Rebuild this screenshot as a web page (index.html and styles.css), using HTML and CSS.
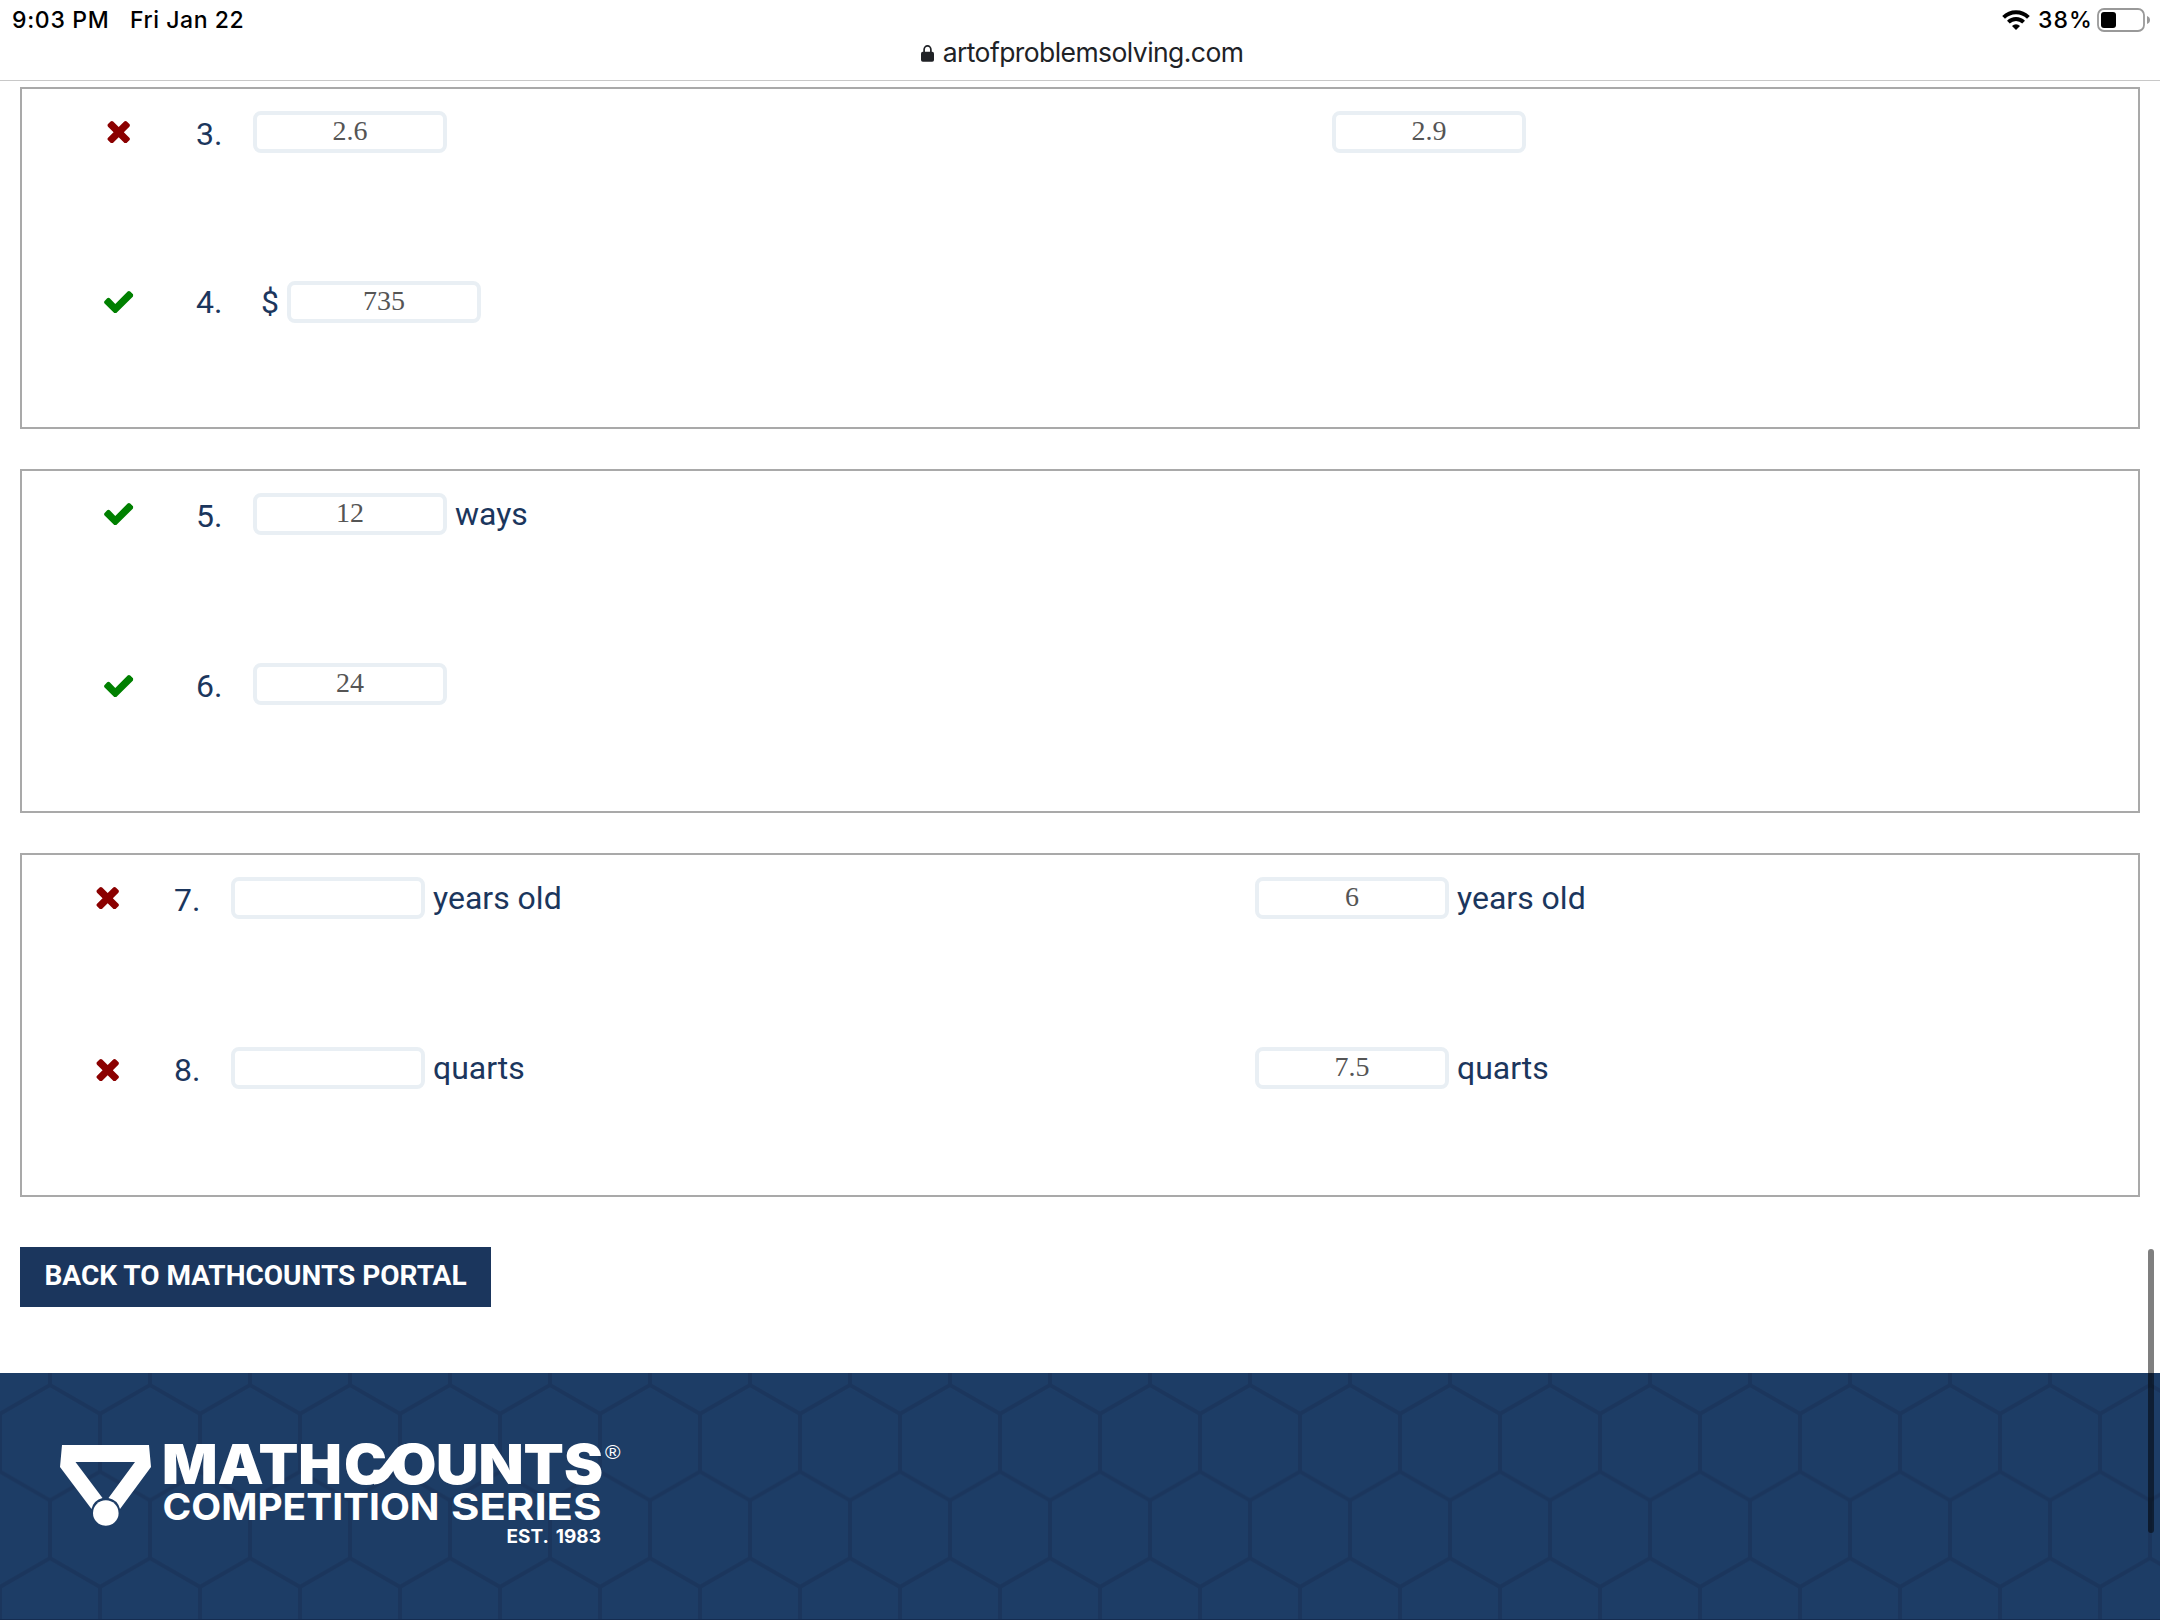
FILE: index.html
```html
<!DOCTYPE html>
<html lang="en">
<head>
<meta charset="utf-8">
<title>MATHCOUNTS Competition Series</title>
<link rel="stylesheet" href="styles.css">
</head>
<body>
<svg class="sprite" aria-hidden="true">
  <symbol id="cross" viewBox="302 366 1188 1188"><path d="M1490 1322q0 40-28 68l-136 136q-28 28-68 28t-68-28l-294-294-294 294q-28 28-68 28t-68-28l-136-136q-28-28-28-68t28-68l294-294-294-294q-28-28-28-68t28-68l136-136q28-28 68-28t68 28l294 294 294-294q28-28 68-28t68 28l136 136q28 28 28 68t-28 68l-294 294 294 294q28 28 28 68z"/></symbol>
  <symbol id="check" viewBox="121 334 1550 1188"><path d="M1671 566q0 40-28 68l-724 724-136 136q-28 28-68 28t-68-28l-136-136-362-362q-28-28-28-68t28-68l136-136q28-28 68-28t68 28l294 295 656-657q28-28 68-28t68 28l136 136q28 28 28 68z"/></symbol>
</svg>

<header class="chrome">
  <div class="status">
    <span class="time">9:03 PM</span>
    <span class="date">Fri Jan 22</span>
    <svg class="wifi" viewBox="0 0 28 20"><g fill="none" stroke="#000" stroke-width="3.9"><path d="M1.6 7.4a17.6 17.6 0 0 1 24.8 0"/><path d="M6.4 12.2a10.8 10.8 0 0 1 15.2 0"/></g><path d="M14 20l-4-4.1a5.8 5.8 0 0 1 8 0z"/></svg>
    <span class="percent">38%</span>
    <svg class="battery" viewBox="0 0 54 24"><rect x="1" y="1" width="46" height="22" rx="6" fill="none" stroke="#999" stroke-width="1.8"/><rect x="4" y="4" width="15" height="16" rx="3"/><path d="M50 8q3 1.2 3 4t-3 4z" fill="#999"/></svg>
  </div>
  <div class="address">
    <svg class="lock" viewBox="0 0 13 17"><path d="M3.1 8V4.8a3.4 3.9 0 0 1 6.8 0V8" fill="none" stroke="#202226" stroke-width="1.7"/><rect y="6.8" width="13" height="10" rx="1.8" fill="#202226"/></svg>
    <span class="url">artofproblemsolving.com</span>
  </div>
</header>

<main class="page">
  <section class="sheet short">
    <div class="problem">
      <svg class="mark wrong"><use href="#cross"/></svg><span class="number">3.</span>
      <div class="answer"><span class="field">2.6</span></div>
      <div class="answer"><span class="field">2.9</span></div>
    </div>
    <div class="problem">
      <svg class="mark right"><use href="#check"/></svg><span class="number raised">4.</span>
      <div class="answer prefixed"><span>$</span><span class="field">735</span></div>
    </div>
  </section>

  <section class="sheet">
    <div class="problem">
      <svg class="mark right"><use href="#check"/></svg><span class="number">5.</span>
      <div class="answer"><span class="field">12</span><span>ways</span></div>
    </div>
    <div class="problem">
      <svg class="mark right low"><use href="#check"/></svg><span class="number">6.</span>
      <div class="answer"><span class="field">24</span></div>
    </div>
  </section>

  <section class="sheet narrow">
    <div class="problem">
      <svg class="mark wrong"><use href="#cross"/></svg><span class="number">7.</span>
      <div class="answer"><span class="field"></span><span>years old</span></div>
      <div class="answer"><span class="field">6</span><span>years old</span></div>
    </div>
    <div class="problem">
      <svg class="mark wrong low"><use href="#cross"/></svg><span class="number">8.</span>
      <div class="answer"><span class="field"></span><span>quarts</span></div>
      <div class="answer"><span class="field">7.5</span><span>quarts</span></div>
    </div>
  </section>

  <a class="portal">BACK TO MATHCOUNTS PORTAL</a>
</main>

<footer class="footer">
  <svg class="banner" viewBox="0 1373 2160 247">
    <defs>
      <pattern id="hex" width="100" height="173.2" x="0" y="1385" patternUnits="userSpaceOnUse">
        <path d="M0 28.8 50 0 100 28.8M0 28.8V86.6M100 28.8V86.6M0 86.6 50 115.4 100 86.6M50 115.4V173.2M-10 23 0 28.8M100 28.8 110 23M40 179 50 173.2 60 179M50 0V-6" fill="none" stroke="#1b365d" stroke-width="4"/>
      </pattern>
    </defs>
    <rect y="1373" width="2160" height="247" fill="url(#hex)"/>
    <rect y="1619" width="2160" height="1" fill="#152c50"/>
    <g fill="#fff">
      <path fill-rule="evenodd" d="M62 1445H149L151 1467 120 1509A15 15 0 0 0 108.500 1498L135 1462H75.500L102.500 1498A15 15 0 0 0 91.500 1509L60 1467Z"/>
      <circle cx="105.800" cy="1513" r="12.800"/>
      <g class="logo-title">
        <text x="162" y="1484.300" textLength="180" lengthAdjust="spacingAndGlyphs">MATH</text>
        <text x="344" y="1484.300" textLength="43" lengthAdjust="spacingAndGlyphs">C</text>
        <text x="390.500" y="1484.300" textLength="46" lengthAdjust="spacingAndGlyphs">O</text>
        <text x="436" y="1484.300" textLength="167" lengthAdjust="spacingAndGlyphs">UNTS</text>
      </g>
      <path d="M374 1484.500Q382 1484 388 1478L394 1470 402 1457 410 1452V1443.600Q400 1444 395 1450L382 1467 374 1475Z"/>
      <text class="logo-series" x="162.500" y="1520" textLength="277" lengthAdjust="spacingAndGlyphs">COMPETITION</text>
      <text class="logo-series" x="451" y="1520" textLength="150.500" lengthAdjust="spacingAndGlyphs">SERIES</text>
      <text class="logo-year" x="506.500" y="1543" textLength="94.500" lengthAdjust="spacingAndGlyphs">EST. 1983</text>
      <text class="logo-reg" x="605" y="1458.500" textLength="15.500" lengthAdjust="spacingAndGlyphs">®</text>
    </g>
  </svg>
</footer>
<div class="scrollbar"></div>
</body>
</html>
```
FILE: styles.css
```css
* { box-sizing: border-box; }
body {
  margin: 0;
  height: 1620px;
  overflow: hidden;
  background: #fff;
  color: #1b365d;
  font: 32px/42px Roboto, sans-serif;
}
.sprite { position: absolute; width: 0; height: 0; }

/* Browser chrome */
.chrome {
  height: 81px;
  border-bottom: 1px solid #c8c8c8;
  color: #000;
  font-family: Inter, sans-serif;
}
.status {
  display: flex;
  align-items: center;
  height: 40px;
  padding-left: 12px;
  font-size: 23px;
  font-weight: 500;
  line-height: 40px;
}
.time { width: 118px; letter-spacing: .7px; }
.date { letter-spacing: .55px; }
.wifi { width: 28px; height: 20px; margin-left: auto; }
.percent { width: 66px; padding-left: 8px; letter-spacing: 1px; }
.battery { width: 54px; height: 24px; margin: 0 9px 0 1px; }
.address {
  display: flex;
  align-items: center;
  justify-content: center;
  gap: 9px;
  height: 40px;
  padding-left: 4px;
  color: #202226;
  font-size: 26.500px;
  letter-spacing: -.57px;
  line-height: 26px;
  padding-bottom: 14px;
}
.url { padding-bottom: 2px; }
.lock { width: 13px; height: 17px; }

/* Answer sheets */
.page { height: 1292px; padding: 6px 20px 0; }
.sheet {
  --mark: 48.3px;
  --offset: 34px;
  --number: 57px;
  --answer: 1079px;
  height: 344px;
  margin-bottom: 40px;
  padding-top: 22px;
  border: 2px solid #a9a9a9;
}
.sheet.short { height: 342px; }
.sheet.narrow { --mark: 59.3px; --offset: 12px; --answer: 1024px; margin-bottom: 50px; }
.problem {
  display: grid;
  grid-template-columns: var(--offset) 140px var(--number) var(--answer) 1fr;
  align-items: start;
  height: 170px;
}
.mark {
  grid-column: 2;
  width: 29.400px;
  height: 22.400px;
  margin: 9.600px 0 0 var(--mark);
}
.mark.low { margin-top: 11.500px; }
.wrong { fill: #8b0000; }
.right { fill: #008000; }
.number { padding-top: 2px; }
.number.raised { padding-top: 0; }
.answer { display: flex; gap: 8px; }
.answer.prefixed { padding-left: 8px; }
.field {
  width: 194px;
  height: 42px;
  border: 4px solid #e9eff4;
  border-radius: 8px;
  color: #555;
  font: 28px/31px "Liberation Serif", serif;
  text-align: center;
}
.portal {
  display: block;
  width: 471px;
  height: 60px;
  background: #1b365d;
  color: #fff;
  font-size: 28px;
  font-weight: 700;
  line-height: 58px;
  text-align: center;
}

/* Footer */
.footer { height: 247px; background: #1d3d66; }
.banner { display: block; width: 2160px; height: 247px; font-family: Inter, sans-serif; }
.logo-title { font-size: 54.500px; font-weight: 900; }
.logo-series { font-size: 37.500px; font-weight: 700; }
.logo-year { font-size: 18.500px; font-weight: 700; word-spacing: 3px; }
.logo-reg { font: 21px "Liberation Sans", sans-serif; }
.scrollbar {
  position: absolute;
  top: 1249px;
  right: 6px;
  width: 6px;
  height: 284px;
  border-radius: 3px;
  background: rgba(0, 0, 0, .5);
}
```
